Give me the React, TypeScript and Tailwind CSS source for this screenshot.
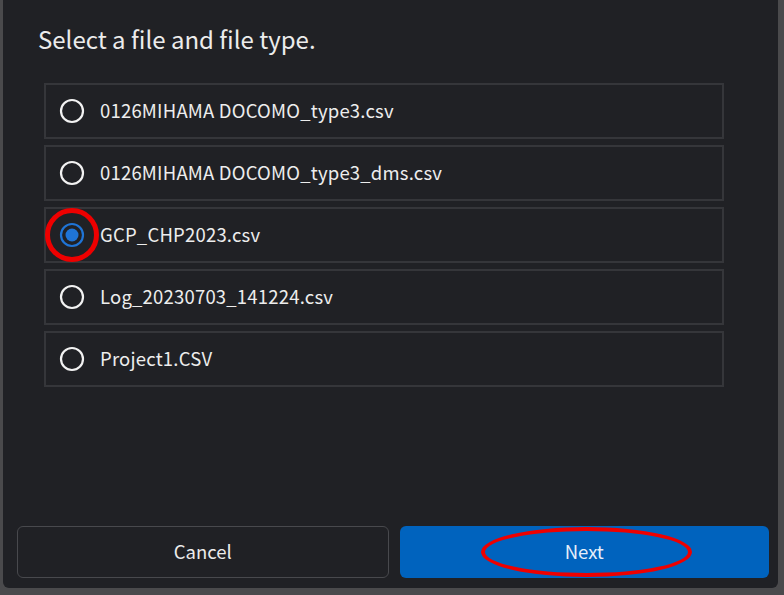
import React, { useState } from "react";

const files = [
  "0126MIHAMA DOCOMO_type3.csv",
  "0126MIHAMA DOCOMO_type3_dms.csv",
  "GCP_CHP2023.csv",
  "Log_20230703_141224.csv",
  "Project1.CSV",
];

function Radio({ checked }: { checked: boolean }) {
  return (
    <svg width="28" height="28" viewBox="0 0 28 28" className="shrink-0">
      {checked ? (
        <>
          <circle cx="14" cy="14" r="11" fill="none" stroke="#1f74d6" strokeWidth="2.2" />
          <circle cx="14" cy="14" r="6.5" fill="#1f74d6" />
        </>
      ) : (
        <circle cx="14" cy="14" r="11" fill="none" stroke="#f2f2f2" strokeWidth="2.2" />
      )}
    </svg>
  );
}

export default function App() {
  const [selected, setSelected] = useState(2);
  return (
    <div
      className="w-[784px] h-[595px] bg-[#4a4a4c] overflow-hidden"
      style={{ fontFamily: '"Noto Sans CJK JP", "Noto Sans", sans-serif' }}
    >
      <div className="ml-[3px] w-[775px] h-[588px] bg-[#202125] rounded-b-[6px] flex flex-col">
        <h1 className="pl-[35px] pt-[22px] text-[24px] leading-[34px] text-[#ececec] font-normal">
          Select a file and file type.
        </h1>
        <div className="ml-[41px] mt-[27px] w-[680px] flex flex-col gap-[6px]">
          {files.map((f, i) => (
            <div
              key={f}
              onClick={() => setSelected(i)}
              className="relative h-[56px] border-2 border-[#35363a] flex items-center pl-[12px] gap-[14px] cursor-pointer"
            >
              <Radio checked={selected === i} />
              <span className="text-[18.5px] text-[#ededed] tracking-[0.2px]">{f}</span>
              {selected === i && (
                <span className="absolute left-[-1px] top-[-1px] w-[54px] h-[54px] rounded-full border-[5px] border-[#ee0000] pointer-events-none" />
              )}
            </div>
          ))}
        </div>
        <div className="mt-auto mb-[10px] ml-[14px] mr-[9px] flex gap-[11px]">
          <button className="flex-1 h-[52px] rounded-[6px] border border-[#48494d] bg-[#202125] text-[18.5px] text-[#ececec]">
            Cancel
          </button>
          <button className="relative flex-1 h-[52px] rounded-[6px] bg-[#0063be] text-[18.5px] text-[#e6eefa]">
            Next
            <span className="absolute left-[81px] top-[1px] w-[211px] h-[50px] rounded-[50%] border-[4px] border-[#ee0000] pointer-events-none" />
          </button>
        </div>
      </div>
    </div>
  );
}
